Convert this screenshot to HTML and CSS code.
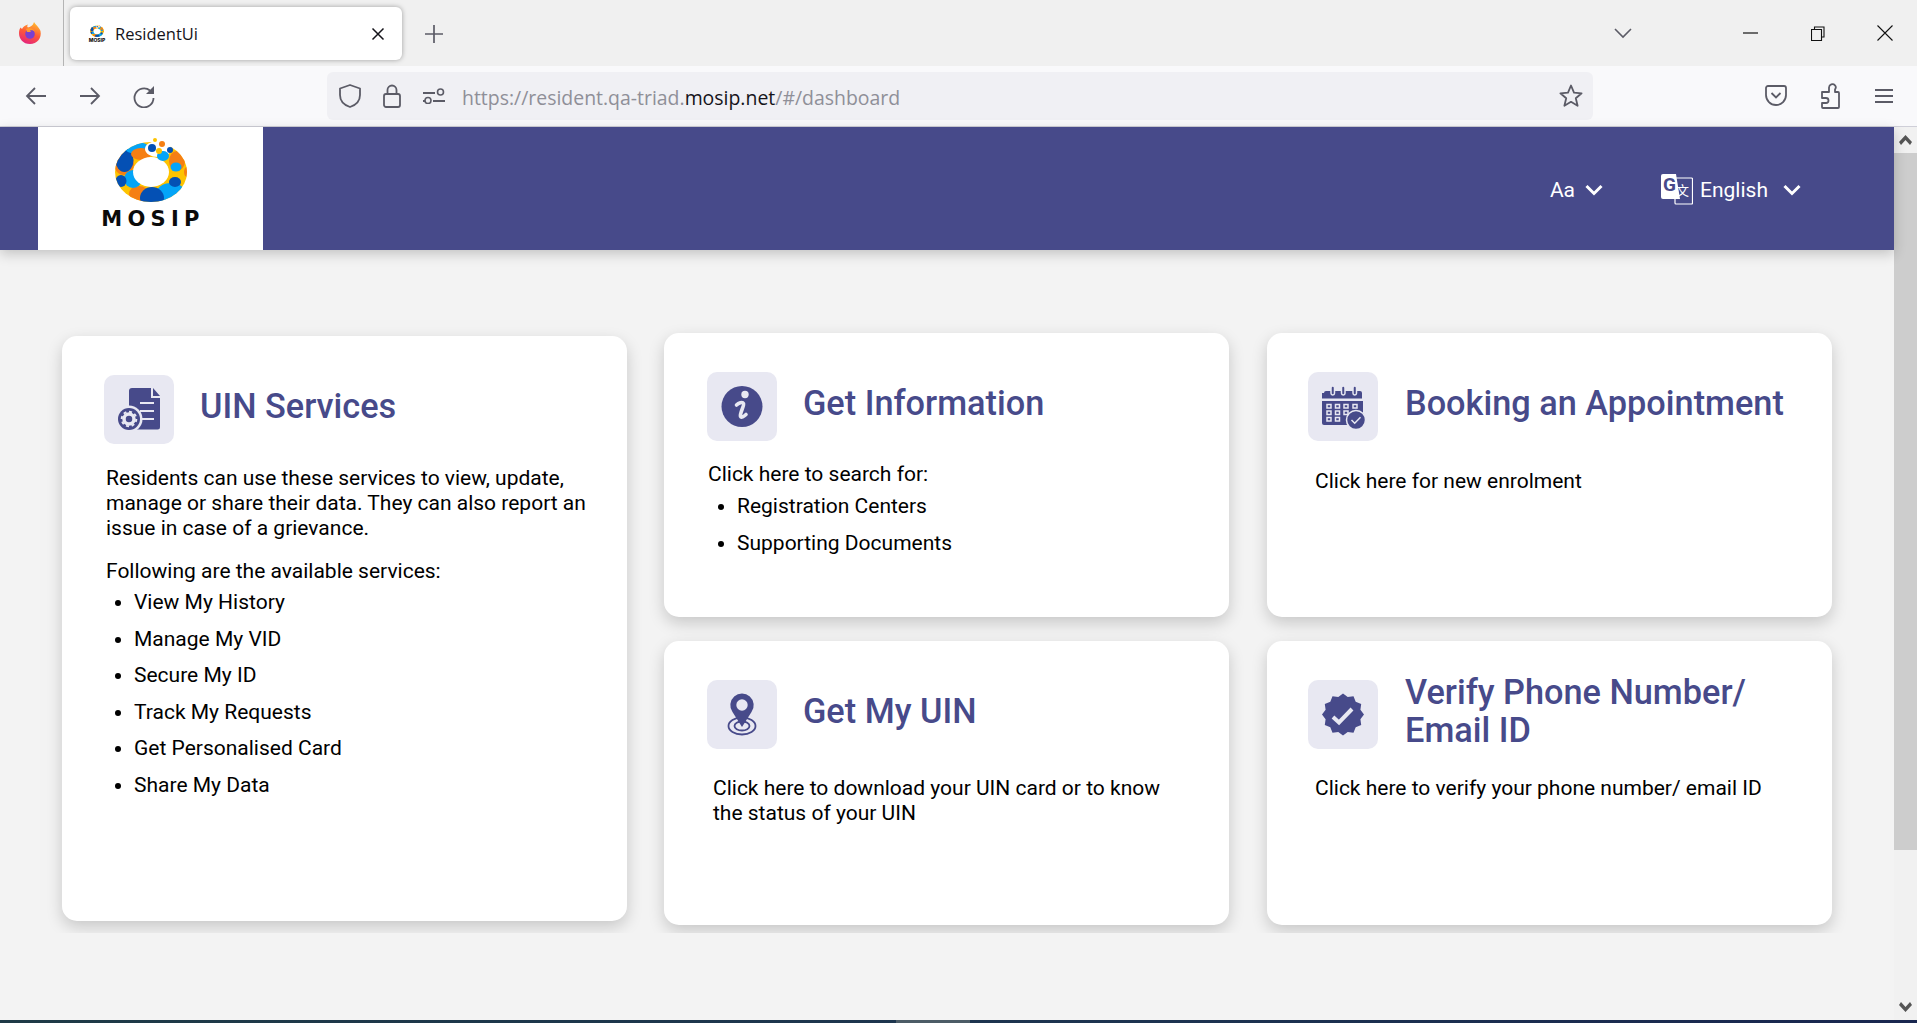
FILE: index.html
```html
<!DOCTYPE html>
<html lang="en">
  <head>
    <meta charset="UTF-8" />
    <meta name="viewport" content="width=device-width, initial-scale=1.0" />
    <title>ResidentUi</title>
    <link rel="stylesheet" href="styles.css">
  </head>
  <body>
    <svg class="defs" width="0" height="0">
      <defs>
        <clipPath id="ring-clip"><ellipse cx="40" cy="38" rx="36" ry="30" /></clipPath>
        <symbol id="mosip-ring" viewBox="0 0 80 68">
          <g clip-path="url(#ring-clip)">
            <rect width="80" height="68" fill="#fdc300" />
            <ellipse cx="13" cy="30" rx="10" ry="11" fill="#f57f14" />
            <ellipse cx="13.5" cy="26" rx="9" ry="12" fill="#0450b4" />
            <ellipse cx="26" cy="14" rx="12" ry="6" fill="#04a4f8" />
            <ellipse cx="30" cy="20" rx="10" ry="6" fill="#f57f14" />
            <ellipse cx="66" cy="27" rx="8" ry="10" fill="#f57f14" />
            <ellipse cx="76" cy="38" rx="3" ry="5" fill="#f57f14" />
            <ellipse cx="60" cy="60" rx="15" ry="11" fill="#04a4f8" />
            <ellipse cx="28" cy="60" rx="10" ry="8" fill="#f57f14" />
            <ellipse cx="22" cy="45" rx="9" ry="9" fill="#04a4f8" />
            <ellipse cx="10" cy="47" rx="5.5" ry="6" fill="#0450b4" />
            <ellipse cx="41" cy="64" rx="12" ry="11" fill="#0450b4" />
            <ellipse cx="64" cy="48" rx="6" ry="5" fill="#0450b4" />
            <ellipse cx="65" cy="33" rx="5.5" ry="4.5" fill="#04a4f8" />
          </g>
          <ellipse cx="40" cy="38" rx="18" ry="15" fill="#fff" />
          <ellipse cx="47" cy="15" rx="13" ry="8" fill="#fff" />
          <ellipse cx="52" cy="22" rx="6" ry="5" fill="#04a4f8" />
          <circle cx="41" cy="14" r="4" fill="#0450b4" />
          <circle cx="51" cy="10" r="3" fill="#f57f14" />
          <circle cx="44" cy="6" r="2" fill="#fdc300" />
          <circle cx="48" cy="17" r="3" fill="#fdc300" />
          <circle cx="59" cy="16" r="3" fill="#0450b4" />
        </symbol>
      </defs>
    </svg>

    <div class="tabstrip">
      <div class="ff-cell">
        <svg width="24" height="24" viewBox="0 0 24 24">
          <defs>
            <linearGradient id="ff-grad" x1="0.7" y1="0" x2="0.3" y2="1">
              <stop offset="0" stop-color="#ffbd2e" />
              <stop offset="0.5" stop-color="#ff5a36" />
              <stop offset="1" stop-color="#e3217f" />
            </linearGradient>
          </defs>
          <path d="M16 1c1 2 5 5 6.500 9 1.500 7-3.500 13-10.500 13S1 18 1 12c0-2 .5-4 1.500-5.500L4 8c1-2 3-4 6-4.500-1 1.500-1 2.500 0 3 2-.5 5-1.500 6-5.500z" fill="url(#ff-grad)" />
          <circle cx="12" cy="13" r="4.800" fill="#7a3fd0" />
          <path d="M8 8c3-2 8-1 9 3-1-1.500-3-2-5-1.500l1 1.500-4 0z" fill="#ff9a2e" />
        </svg>
      </div>
      <div class="tab">
        <div class="favicon">
          <svg width="16" height="13"><use href="#mosip-ring" width="16" height="13" /></svg>
          <span class="favicon-word">MOSIP</span>
        </div>
        <span class="tab-title">ResidentUi</span>
        <svg class="tab-close" width="14" height="14" viewBox="0 0 14 14"><path d="M1.500 1.500l11 11M12.500 1.500l-11 11" stroke="#15141a" stroke-width="1.500" /></svg>
      </div>
      <div class="new-tab">
        <svg width="18" height="18" viewBox="0 0 18 18"><path d="M9 0v18M0 9h18" stroke="#5b5b66" stroke-width="1.700" /></svg>
      </div>
      <div class="tab-list">
        <svg width="18" height="11" viewBox="0 0 18 11"><path d="M1 1l8 8 8-8" fill="none" stroke="#5b5b66" stroke-width="1.600" /></svg>
      </div>
      <div class="win-btn">
        <svg width="15" height="2" viewBox="0 0 15 2"><path d="M0 1h15" stroke="#111" stroke-width="1.200" /></svg>
      </div>
      <div class="win-btn">
        <svg width="14" height="15" viewBox="0 0 14 15"><path d="M3.500 3V1h9.500v10h-2M.5 3.500h10v11H.5z" fill="none" stroke="#111" stroke-width="1.100" /></svg>
      </div>
      <div class="win-btn win-close">
        <svg width="16" height="16" viewBox="0 0 16 16"><path d="M.5.5l15 15M15.500.5l-15 15" stroke="#111" stroke-width="1.100" /></svg>
      </div>
    </div>

    <div class="toolbar">
      <div class="nav-btn">
        <svg width="22" height="20" viewBox="0 0 22 20"><path d="M21 10H2M10 2l-8 8 8 8" fill="none" stroke="#5b5b66" stroke-width="1.800" /></svg>
      </div>
      <div class="nav-btn">
        <svg width="22" height="20" viewBox="0 0 22 20"><path d="M1 10h19M12 2l8 8-8 8" fill="none" stroke="#5b5b66" stroke-width="1.800" /></svg>
      </div>
      <div class="nav-btn">
        <svg width="22" height="24" viewBox="0 0 22 24"><path d="M17 6.500A9.500 9.500 0 1 0 20.500 14" fill="none" stroke="#5b5b66" stroke-width="1.800" /><path d="M21 2v8h-8z" fill="#5b5b66" /></svg>
      </div>
      <div class="urlbar">
        <div class="url-icon">
          <svg width="22" height="24" viewBox="0 0 22 24"><path d="M11 1l10 3.500V11c0 6-4 10-10 12C5 21 1 17 1 11V4.500z" fill="none" stroke="#5b5b66" stroke-width="1.800" stroke-linejoin="round" /></svg>
        </div>
        <div class="url-icon">
          <svg width="18" height="24" viewBox="0 0 18 24"><rect x="1" y="10" width="16" height="13" rx="2" fill="none" stroke="#5b5b66" stroke-width="1.800" /><path d="M4.500 10V6a4.500 4.500 0 0 1 9 0v4" fill="none" stroke="#5b5b66" stroke-width="1.800" /></svg>
        </div>
        <div class="url-icon">
          <svg width="22" height="16" viewBox="0 0 22 16"><path d="M0 5h12M0 13h2M10 13h12" stroke="#5b5b66" stroke-width="1.800" /><circle cx="17.500" cy="4" r="3" fill="none" stroke="#5b5b66" stroke-width="1.600" /><circle cx="5" cy="12.500" r="3" fill="none" stroke="#5b5b66" stroke-width="1.600" /></svg>
        </div>
        <div class="url-text">https://resident.qa-triad.<span class="url-domain">mosip.net</span>/#/dashboard</div>
        <div class="url-star">
          <svg width="24" height="24" viewBox="0 0 24 24"><path d="M12 1.500l3 7.200 7.600.6-5.800 5 1.800 7.500L12 17.800l-6.600 4 1.800-7.500-5.800-5 7.600-.6z" fill="none" stroke="#5b5b66" stroke-width="1.800" stroke-linejoin="round" /></svg>
        </div>
      </div>
      <div class="nav-btn nav-first-right">
        <svg width="22" height="22" viewBox="0 0 22 22"><path d="M3 1h16a2 2 0 0 1 2 2v7a10 10 0 0 1-20 0V3a2 2 0 0 1 2-2z" fill="none" stroke="#5b5b66" stroke-width="1.800" /><path d="M6.500 8l4.500 4.500L15.500 8" fill="none" stroke="#5b5b66" stroke-width="1.800" /></svg>
      </div>
      <div class="nav-btn">
        <svg width="20" height="26" viewBox="0 0 20 26"><path d="M9 9V4.500a3.500 3.500 0 0 1 6-2.200c1 1 1 2.700 0 4.200V9h3a1 1 0 0 1 1 1v14a1 1 0 0 1-1 1H3a1 1 0 0 1-1-1v-4h4a2.500 2.500 0 0 0 0-5H2V9z" fill="none" stroke="#5b5b66" stroke-width="1.800" stroke-linejoin="round" /></svg>
      </div>
      <div class="nav-btn">
        <svg width="18" height="16" viewBox="0 0 18 16"><path d="M0 2h18M0 8h18M0 14h18" stroke="#5b5b66" stroke-width="1.800" /></svg>
      </div>
    </div>

    <div class="viewport">
      <div class="page">
        <header class="app-header">
          <div class="logo-box">
            <svg width="80" height="68"><use href="#mosip-ring" width="80" height="68" /></svg>
            <span class="logo-word">MOSIP</span>
          </div>
          <div class="header-actions">
            <div class="font-picker">
              <span>Aa</span>
              <svg class="chevron" width="18" height="12" viewBox="0 0 18 12"><path d="M1.500 2l7.500 7.500L16.500 2" /></svg>
            </div>
            <div class="lang-picker">
              <svg class="translate-icon" width="32" height="31" viewBox="0 0 32 31">
                <rect x="14" y="4" width="17.500" height="26" rx="1" fill="none" stroke="#fff" stroke-width="1.200" />
                <path d="M2 0h13l4 25H2a2 2 0 0 1-2-2V2a2 2 0 0 1 2-2z" fill="#fff" />
                <text class="translate-g" x="2" y="17">G</text>
                <text class="translate-zh" x="15" y="21">文</text>
              </svg>
              <span>English</span>
              <svg class="chevron" width="18" height="12" viewBox="0 0 18 12"><path d="M1.500 2l7.500 7.500L16.500 2" /></svg>
            </div>
          </div>
        </header>

        <main class="dashboard">
          <section class="card card-tall">
            <div class="card-head">
              <div class="tile">
                <svg width="70" height="69" viewBox="0 0 70 69">
                  <path d="M28 13h19v10h9v29a2.500 2.500 0 0 1-2.500 2.500H28A3 3 0 0 1 25 52V16a3 3 0 0 1 3-3z" fill="#474a8a" />
                  <path d="M49 13l7 8h-7z" fill="#474a8a" />
                  <path d="M36 28h14M36 36h14M38 44h12" stroke="#e8e8f2" stroke-width="2" />
                  <circle cx="25" cy="44" r="13.500" fill="#e8e8f2" />
                  <circle cx="25" cy="44" r="11" fill="#474a8a" />
                  <circle cx="25" cy="44" r="5" fill="none" stroke="#e8e8f2" stroke-width="3.500" />
                  <circle cx="25" cy="44" r="7.300" fill="none" stroke="#e8e8f2" stroke-width="2" stroke-dasharray="3 2.700" />
                </svg>
              </div>
              <h2 class="card-title">UIN Services</h2>
            </div>
            <p class="card-text card-lead">Residents can use these services to view, update, manage or share their data. They can also report an issue in case of a grievance.</p>
            <p class="card-text card-lead services-intro">Following are the available services:</p>
            <ul class="card-list">
              <li>View My History</li>
              <li>Manage My VID</li>
              <li>Secure My ID</li>
              <li>Track My Requests</li>
              <li>Get Personalised Card</li>
              <li>Share My Data</li>
            </ul>
          </section>

          <section class="card card-info">
            <div class="card-head">
              <div class="tile">
                <svg width="70" height="69" viewBox="0 0 70 69">
                  <circle cx="35" cy="34.500" r="20.500" fill="#474a8a" />
                  <circle cx="38" cy="22.500" r="3.700" fill="#e8e8f2" />
                  <path d="M29.500 33c2-2 6-3.500 7-1.500 1 2-4 10-3 13 .5 1.500 3.500 0 5.500-2" fill="none" stroke="#e8e8f2" stroke-width="3.600" stroke-linecap="round" />
                </svg>
              </div>
              <h2 class="card-title">Get Information</h2>
            </div>
            <p class="card-text">Click here to search for:</p>
            <ul class="card-list">
              <li>Registration Centers</li>
              <li>Supporting Documents</li>
            </ul>
          </section>

          <section class="card card-right">
            <div class="card-head">
              <div class="tile">
                <svg width="70" height="69" viewBox="0 0 70 69">
                  <path d="M16 21a2 2 0 0 1 2-2h34a2 2 0 0 1 2 2v5.500H14V21z" fill="#474a8a" />
                  <path d="M14 29h41v22a2 2 0 0 1-2 2H16a2 2 0 0 1-2-2z" fill="#474a8a" />
                  <g fill="none" stroke="#e8e8f2" stroke-width="1.500">
                    <rect x="23" y="14" width="3.500" height="9" rx="1.700" fill="#474a8a" />
                    <rect x="33.500" y="14" width="3.500" height="9" rx="1.700" fill="#474a8a" />
                    <rect x="45" y="14" width="3.500" height="9" rx="1.700" fill="#474a8a" />
                    <rect x="19" y="32.500" width="4" height="3.500" />
                    <rect x="27.500" y="32.500" width="4" height="3.500" />
                    <rect x="36" y="32.500" width="4" height="3.500" />
                    <rect x="45" y="32.500" width="4" height="3.500" />
                    <rect x="19" y="39" width="4" height="3.500" />
                    <rect x="27.500" y="39" width="4" height="3.500" />
                    <rect x="36" y="39" width="4" height="3.500" />
                    <rect x="19" y="45.500" width="4" height="3.500" />
                    <rect x="27.500" y="45.500" width="4" height="3.500" />
                  </g>
                  <circle cx="48" cy="48" r="9.500" fill="#474a8a" stroke="#e8e8f2" stroke-width="1.500" />
                  <path d="M43.500 48l3.200 3.200 5.800-6" fill="none" stroke="#e8e8f2" stroke-width="1.500" />
                </svg>
              </div>
              <h2 class="card-title">Booking an Appointment</h2>
            </div>
            <p class="card-text card-indent">Click here for new enrolment</p>
          </section>

          <section class="card card-low">
            <div class="card-head">
              <div class="tile">
                <svg width="70" height="69" viewBox="0 0 70 69">
                  <ellipse cx="35" cy="46" rx="13.500" ry="8.500" fill="none" stroke="#474a8a" stroke-width="1.800" />
                  <ellipse cx="35" cy="46" rx="7.500" ry="4.500" fill="none" stroke="#474a8a" stroke-width="1.800" />
                  <path d="M35 47L25.500 32a11.700 11.700 0 1 1 19 0z" fill="#474a8a" />
                  <circle cx="35" cy="25" r="5.700" fill="#e8e8f2" />
                </svg>
              </div>
              <h2 class="card-title">Get My UIN</h2>
            </div>
            <p class="card-text card-indent-sm">Click here to download your UIN card or to know the status of your UIN</p>
          </section>

          <section class="card card-right card-low">
            <div class="card-head">
              <div class="tile">
                <svg width="70" height="69" viewBox="0 0 70 69">
                  <polygon points="35,13.500 39.700,17.100 45.500,16.300 47.700,21.800 53.200,24 52.400,29.800 56,34.500 52.400,39.200 53.200,45 47.700,47.200 45.500,52.700 39.700,51.900 35,55.500 30.300,51.900 24.500,52.700 22.300,47.200 16.800,45 17.600,39.200 14,34.500 17.600,29.800 16.800,24 22.300,21.800 24.500,16.300 30.300,17.100" fill="#474a8a" />
                  <path d="M25 37l6 5.500 13-13.500" fill="none" stroke="#e8e8f2" stroke-width="4" />
                </svg>
              </div>
              <h2 class="card-title">Verify Phone Number/ Email ID</h2>
            </div>
            <p class="card-text card-indent">Click here to verify your phone number/ email ID</p>
          </section>
        </main>
      </div>

      <div class="scrollbar">
        <div class="scroll-btn">
          <svg width="13" height="10" viewBox="0 0 13 10"><path d="M6.500 0l6.500 7-2 3-4.500-5L2 10 0 7z" fill="#555" /></svg>
        </div>
        <div class="scroll-thumb"></div>
        <div class="scroll-track"></div>
        <div class="scroll-btn">
          <svg width="13" height="10" viewBox="0 0 13 10"><path d="M6.500 10L0 3l2-3 4.500 5L11 0l2 3z" fill="#555" /></svg>
        </div>
      </div>
    </div>

    <div class="taskbar-edge"><div class="taskbar-active"></div></div>
  </body>
</html>
```

FILE: styles.css
```css
* {
  box-sizing: border-box;
}

html,
body {
  height: 100%;
}

body {
  margin: 0;
  display: flex;
  flex-direction: column;
  overflow: hidden;
  font-family: Roboto, Arial, sans-serif;
  background-color: #f3f3f3;
}

.defs {
  position: absolute;
}

/* browser chrome */
.tabstrip {
  display: flex;
  align-items: flex-start;
  flex: none;
  height: 66px;
  background-color: #f0f0f0;
}

.ff-cell {
  display: flex;
  align-items: center;
  justify-content: center;
  width: 64px;
  height: 66px;
  padding-right: 4px;
  border-right: 1px solid #b4b4b4;
}

.tab {
  display: flex;
  align-items: center;
  width: 332px;
  height: 53px;
  margin: 7px 0 0 6px;
  padding: 0 17px;
  background-color: #fff;
  border-radius: 6px;
  box-shadow: 0 0 5px rgba(0, 0, 0, 0.35);
}

.favicon {
  display: flex;
  flex-direction: column;
  align-items: center;
  width: 20px;
  line-height: 6px;
}

.favicon-word {
  font-family: Inter, Arial, sans-serif;
  font-size: 5px;
  font-weight: 800;
  color: #111;
}

.tab-title {
  flex: 1;
  margin-left: 8px;
  font-family: "Open Sans", Arial, sans-serif;
  font-size: 16.5px;
  color: #15141a;
}

.new-tab {
  display: flex;
  justify-content: center;
  width: 44px;
  margin: 25px 0 0 10px;
}

.tab-list {
  margin: 24px 84px 0 auto;
}

.win-btn {
  display: flex;
  align-items: center;
  justify-content: center;
  width: 68px;
  height: 66px;
}

.win-close {
  width: 65px;
}

.toolbar {
  display: flex;
  align-items: center;
  flex: none;
  height: 61px;
  padding: 0 6px 1px 9px;
  background-color: #f9f9fb;
  border-bottom: 1px solid #cfcfd8;
}

.nav-btn {
  display: flex;
  align-items: center;
  justify-content: center;
  width: 54px;
}

.nav-first-right {
  margin-left: 156px;
}

.urlbar {
  display: flex;
  align-items: center;
  width: 1266px;
  height: 48px;
  margin: 0 0 0 156px;
  padding: 0 10px 0 2px;
  background-color: #f0f0f4;
  border-radius: 6px;
}

.url-icon {
  display: flex;
  align-items: center;
  justify-content: center;
  width: 42px;
}

.url-text {
  margin-left: 7px;
  padding-top: 3px;
  font-family: "Open Sans", Arial, sans-serif;
  font-size: 19.45px;
  color: #8f8f98;
}

.url-domain {
  color: #15141a;
}

.url-star {
  display: flex;
  margin-left: auto;
}

/* page */
.viewport {
  display: flex;
  flex: 1;
  min-height: 0;
}

.page {
  flex: 1;
  min-width: 0;
}

.app-header {
  position: relative;
  display: flex;
  align-items: center;
  justify-content: space-between;
  height: 123px;
  padding: 0 93px 0 38px;
  background-color: #474a8a;
  box-shadow: 0 4px 12px rgba(0, 0, 0, 0.2);
}

.logo-box {
  display: flex;
  flex-direction: column;
  align-items: center;
  width: 225px;
  height: 123px;
  padding-top: 7px;
  background-color: #fff;
}

.logo-word {
  margin-top: 4px;
  padding-left: 5px;
  font-family: "DejaVu Sans", Arial, sans-serif;
  font-size: 21px;
  font-weight: 700;
  line-height: 26px;
  letter-spacing: 5.3px;
  color: #0b0b0b;
}

.header-actions {
  display: flex;
  align-items: center;
  gap: 58px;
  padding-top: 2px;
  font-size: 21px;
  color: #fff;
}

.font-picker,
.lang-picker {
  display: flex;
  align-items: center;
}

.font-picker svg {
  margin-left: 10px;
}

.lang-picker span {
  margin: 0 15px 0 7px;
}

.chevron path {
  fill: none;
  stroke: #fff;
  stroke-width: 3;
}

.translate-g {
  font-family: Roboto, Arial, sans-serif;
  font-size: 19px;
  font-weight: 700;
  fill: #474a8a;
}

.translate-zh {
  font-family: "Noto Sans CJK SC", sans-serif;
  font-size: 13px;
  fill: #fff;
}

.dashboard {
  display: grid;
  grid-template-columns: 565px 565px 1fr;
  grid-template-rows: 284px 284px;
  gap: 24px 37px;
  height: 683px;
  padding: 83px 62px 8px;
  overflow: hidden;
}

.card {
  padding: 39px 40px 0 43px;
  background-color: #fff;
  border-radius: 15px;
  box-shadow: 0 6px 16px rgba(0, 0, 0, 0.18);
}

.card-right {
  margin-left: 1px;
  padding-left: 41px;
}

.card-right .card-head {
  gap: 27px;
}

.card-tall {
  grid-row: 1 / 3;
  margin: 3px 0 4px;
  padding-left: 42px;
}

.card-head {
  display: flex;
  align-items: center;
  gap: 26px;
  height: 69px;
  margin-bottom: 21px;
}

.card-tall .card-head {
  margin-bottom: 22px;
}

.tile {
  flex: none;
  width: 70px;
  height: 69px;
  background-color: #e8e8f2;
  border-radius: 10px;
}

.tile svg {
  display: block;
}

.card-title {
  margin: 0;
  padding-bottom: 7px;
  font-size: 34.3px;
  font-weight: 500;
  line-height: 38px;
  color: #474a8a;
}

.card-text {
  margin: 0;
  font-size: 21px;
  line-height: 25px;
  color: #000;
}

.card-lead {
  margin-left: 2px;
}

.card-info .card-text {
  margin-left: 1px;
}

.services-intro {
  margin-top: 18px;
}

.card-indent {
  margin: 28px 0 0 7px;
}

.card-indent-sm {
  margin: 28px 0 0 6px;
}

.card-low .card-text {
  margin-top: 27px;
  line-height: 24.5px;
}

.card-list {
  margin: 0;
  padding-left: 30px;
  font-size: 21px;
  color: #000;
}

.card-info .card-list {
  margin-top: 1px;
}

.card-list li {
  height: 36.5px;
  line-height: 36.5px;
}

/* scrollbar and the strip of taskbar under the window */
.scrollbar {
  display: flex;
  flex-direction: column;
  flex: none;
  width: 23px;
  background-color: #f1f1f1;
}

.scroll-btn {
  display: flex;
  align-items: center;
  justify-content: center;
  flex: none;
  height: 26px;
}

.scroll-thumb {
  flex: none;
  height: 697px;
  background-color: #cdcdcd;
}

.scroll-track {
  flex: 1;
}

.taskbar-edge {
  flex: none;
  height: 3px;
  background: linear-gradient(90deg, #1e3a46, #1c3350 60%, #19264f);
}

.taskbar-active {
  width: 74px;
  height: 3px;
  margin-left: 896px;
  background-color: #4c5c66;
}
```
